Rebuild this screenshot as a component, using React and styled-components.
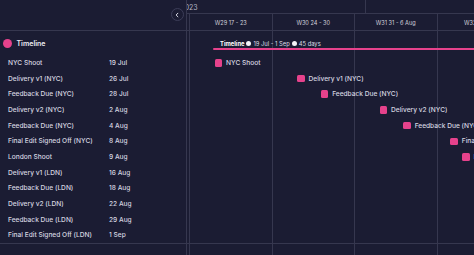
import React from "react";
import styled, { createGlobalStyle } from "styled-components";

const DAY = 82.5 / 7;
const ORIGIN = 2.5; // pane x of 17 Jul
const ROW = 15.7;
const PINK = "#e6428c";
const LINE = "#36374f";
const BG = "#1b1c33";

const pos = (d) => ORIGIN + d * DAY;

const tasks = [
  { name: "NYC Shoot", date: "19 Jul", d: 2 },
  { name: "Delivery v1 (NYC)", date: "26 Jul", d: 9 },
  { name: "Feedback Due (NYC)", date: "28 Jul", d: 11 },
  { name: "Delivery v2 (NYC)", date: "2 Aug", d: 16 },
  { name: "Feedback Due (NYC)", date: "4 Aug", d: 18 },
  { name: "Final Edit Signed Off (NYC)", date: "8 Aug", d: 22 },
  { name: "London Shoot", date: "9 Aug", d: 23 },
  { name: "Delivery v1 (LDN)", date: "16 Aug", d: 30 },
  { name: "Feedback Due (LDN)", date: "18 Aug", d: 32 },
  { name: "Delivery v2 (LDN)", date: "22 Aug", d: 36 },
  { name: "Feedback Due (LDN)", date: "29 Aug", d: 43 },
  { name: "Final Edit Signed Off (LDN)", date: "1 Sep", d: 46 },
];

const weeks = ["W29 17 - 23", "W30 24 - 30", "W31 31 - 6 Aug", "W32 7 - 13", "W33 14 - 20"];
const months = ["Jul 2023", "Aug 2023"];

export default function App() {
  return (
    <>
      <Global />
      <Frame>
        <Side>
          <SideHead>
            <Collapse>
              <svg width="6" height="6" viewBox="0 0 10 10">
                <path d="M6.5 2 L3.5 5 L6.5 8" fill="none" stroke="#e4e4ee" strokeWidth="1.6" strokeLinecap="round" strokeLinejoin="round" />
              </svg>
            </Collapse>
          </SideHead>
          <List>
            <GroupRow>
              <Dot />
              <GroupName>Timeline</GroupName>
            </GroupRow>
            {tasks.map((t, i) => (
              <SideRow key={i}>
                <TaskName>{t.name}</TaskName>
                <TaskDate>{t.date}</TaskDate>
              </SideRow>
            ))}
          </List>
        </Side>
        <Pane>
          <MonthRow style={{ marginLeft: pos(-16) }}>
            {months.map((m) => (
              <MonthCell key={m} style={{ width: 31 * DAY }}>
                {m}
              </MonthCell>
            ))}
          </MonthRow>
          <Grid>
            <WeekRow>
              {weeks.map((w) => (
                <WeekCell key={w}>{w}</WeekCell>
              ))}
            </WeekRow>
            <Tracks>
              <GroupTrack>
                <BarLabel style={{ marginLeft: pos(2) + 7 }}>
                  <b>Timeline</b>
                  <Pip />
                  19 Jul - 1 Sep
                  <Pip />
                  45 days
                </BarLabel>
                <Bar style={{ marginLeft: pos(2), width: 44 * DAY }} />
              </GroupTrack>
              {tasks.map((t, i) => (
                <Track key={i}>
                  <Diamond style={{ marginLeft: pos(t.d) + 1.5 }} />
                  <MileName>{t.name}</MileName>
                </Track>
              ))}
            </Tracks>
          </Grid>
        </Pane>
      </Frame>
    </>
  );
}

const Global = createGlobalStyle`
  html, body {
    margin: 0;
    padding: 0;
    background: ${BG};
  }
  * {
    box-sizing: border-box;
  }
`;
const Frame = styled.div`
  width: 474px;
  height: 255px;
  display: flex;
  overflow: hidden;
  background: ${BG};
  font-family: Inter, "Noto Sans", sans-serif;
  color: #d6d6e0;
`;
const Side = styled.div`
  width: 187px;
  flex-shrink: 0;
  border-right: 1px solid ${LINE};
  display: flex;
  flex-direction: column;
`;
const SideHead = styled.div`
  height: 30.5px;
  border-bottom: 1px solid ${LINE};
  display: flex;
  justify-content: flex-end;
  align-items: flex-start;
  padding: 8px 2.5px 0 0;
`;
const Collapse = styled.div`
  width: 13px;
  height: 13px;
  border-radius: 50%;
  border: 1px solid #3c3d58;
  display: flex;
  align-items: center;
  justify-content: center;
`;
const List = styled.div`
  border-bottom: 1px solid ${LINE};
`;
const GroupRow = styled.div`
  height: 24px;
  padding: 2px 0 0 2.5px;
  display: flex;
  align-items: center;
  gap: 5px;
`;
const Dot = styled.span`
  width: 9px;
  height: 9px;
  border-radius: 50%;
  background: ${PINK};
`;
const GroupName = styled.span`
  font-size: 7px;
  font-weight: 600;
  color: #ececf4;
`;
const SideRow = styled.div`
  height: ${ROW}px;
  display: grid;
  grid-template-columns: 101px 1fr;
  align-items: center;
  padding: 1px 0 0 8px;
  font-size: 6.6px;
  font-weight: 500;
`;
const TaskName = styled.span`
  white-space: nowrap;
`;
const TaskDate = styled.span``;
const Pane = styled.div`
  flex: 1;
  min-width: 0;
  overflow: hidden;
  display: flex;
  flex-direction: column;
`;
const MonthRow = styled.div`
  height: 14px;
  display: flex;
  flex-shrink: 0;
`;
const MonthCell = styled.div`
  flex-shrink: 0;
  height: 100%;
  border-right: 1px solid ${LINE};
  display: flex;
  align-items: center;
  justify-content: center;
  font-size: 7px;
  color: #b4b4c4;
`;
const Grid = styled.div`
  flex: 1;
  display: flex;
  flex-direction: column;
  border-top: 1px solid ${LINE};
  margin-top: -1px;
  background-image: repeating-linear-gradient(
    to right,
    ${LINE} 0 1px,
    transparent 1px 82.5px
  );
  background-position: ${ORIGIN - 0.5}px 0;
`;
const WeekRow = styled.div`
  height: 16.5px;
  display: flex;
  padding-left: ${ORIGIN}px;
  border-bottom: 1px solid ${LINE};
`;
const WeekCell = styled.div`
  width: 82.5px;
  flex-shrink: 0;
  display: flex;
  align-items: center;
  justify-content: center;
  font-size: 5.6px;
  color: #d2d2dc;
  padding-top: 2px;
`;
const Tracks = styled.div`
  border-bottom: 1px solid ${LINE};
`;
const GroupTrack = styled.div`
  height: 24px;
  display: flex;
  flex-direction: column;
  justify-content: flex-end;
  padding-bottom: 4.5px;
`;
const BarLabel = styled.div`
  display: flex;
  align-items: center;
  gap: 2px;
  font-size: 5.8px;
  line-height: 7px;
  margin-bottom: 1px;
  white-space: nowrap;
  color: #dcdce6;
  b {
    font-weight: 700;
    color: #fff;
  }
`;
const Pip = styled.span`
  width: 5px;
  height: 5px;
  border-radius: 50%;
  background: #f4f4f8;
`;
const Bar = styled.div`
  height: 2px;
  background: ${PINK};
  border-radius: 2px 0 0 2px;
  flex-shrink: 0;
`;
const Track = styled.div`
  height: ${ROW}px;
  display: flex;
  align-items: center;
  gap: 4px;
  padding-top: 1px;
`;
const Diamond = styled.span`
  width: 7.5px;
  height: 7.5px;
  border-radius: 1.5px;
  background: ${PINK};
  flex-shrink: 0;
`;
const MileName = styled.span`
  font-size: 6.6px;
  font-weight: 500;
  white-space: nowrap;
  color: #d6d6e0;
`;
